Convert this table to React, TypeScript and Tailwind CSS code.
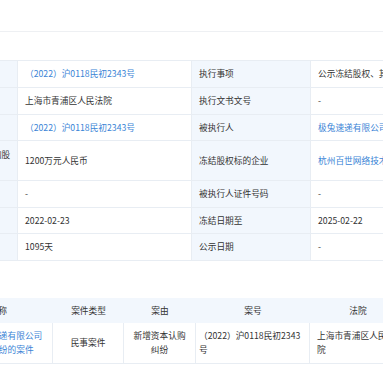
type InfoRow = {
  label1: string[];
  value1: string;
  link1?: boolean;
  label2: string;
  value2: string;
  link2?: boolean;
  height: string;
};

const infoRows: InfoRow[] = [
  {
    label1: ["执行通知书文号"],
    value1: "（2022）沪0118民初2343号",
    link1: true,
    label2: "执行事项",
    value2: "公示冻结股权、其它投资权益",
    height: "h-[27px]"
  },
  {
    label1: ["执行法院"],
    value1: "上海市青浦区人民法院",
    label2: "执行文书文号",
    value2: "-",
    height: "h-[27px]"
  },
  {
    label1: ["执行裁定书文号"],
    value1: "（2022）沪0118民初2343号",
    link1: true,
    label2: "被执行人",
    value2: "极兔速递有限公司",
    link2: true,
    height: "h-[26px]"
  },
  {
    label1: ["被执行人持有的被冻结的股", "权及其他投资权益数额"],
    value1: "1200万元人民币",
    label2: "冻结股权标的企业",
    value2: "杭州百世网络技术有限公司",
    link2: true,
    height: "h-[40px]"
  },
  {
    label1: ["被执行人证件种类"],
    value1: "-",
    label2: "被执行人证件号码",
    value2: "-",
    height: "h-[27px]"
  },
  {
    label1: ["冻结期限自"],
    value1: "2022-02-23",
    label2: "冻结日期至",
    value2: "2025-02-22",
    height: "h-[26px]"
  },
  {
    label1: ["冻结期限"],
    value1: "1095天",
    label2: "公示日期",
    value2: "-",
    height: "h-[27px]"
  }
];

const cell = "flex items-center border-r border-b border-[#e8edf3] px-[7px]";
const labelCell = `${cell} bg-[#f2f7fd] text-[#333]`;

function Value({ text, link }: { text: string; link?: boolean }) {
  return (
    <span className={link ? "whitespace-nowrap text-[#3a84d6]" : "whitespace-nowrap text-[#333]"}>
      {text}
    </span>
  );
}

function DetailTable() {
  return (
    <div className="ml-[-102px] w-[622px] border-t border-l border-[#e8edf3]">
      {infoRows.map((row) => (
        <div key={row.label2} className={`grid grid-cols-[119px_174px_119px_210px] ${row.height}`}>
          <div className={labelCell}>
            <div className="leading-[12px]">
              {row.label1.map((line) => (
                <div key={line} className="whitespace-nowrap">
                  {line}
                </div>
              ))}
            </div>
          </div>
          <div className={cell}>
            <Value text={row.value1} link={row.link1} />
          </div>
          <div className={labelCell}>
            <span className="whitespace-nowrap">{row.label2}</span>
          </div>
          <div className={cell}>
            <Value text={row.value2} link={row.link2} />
          </div>
        </div>
      ))}
    </div>
  );
}

function CaseTable() {
  const head = "flex items-center justify-center";
  const body = "flex items-center border-r border-[#e8edf3] leading-[14px]";
  return (
    <div className="ml-[-74px] w-[480px]">
      <div className="grid h-[25px] grid-cols-[127px_71px_72px_114px_96px] bg-[#f2f7fd] text-[#333]">
        <div className={head}>案件名称</div>
        <div className={head}>案件类型</div>
        <div className={head}>案由</div>
        <div className={head}>案号</div>
        <div className={head}>法院</div>
      </div>
      <div className="grid h-[41px] grid-cols-[127px_71px_72px_114px_96px] border-b border-[#e8edf3] text-[#333]">
        <div className={`${body} pl-[12px] pr-[9px] text-[#3a84d6]`}>
          关于上海极兔速递有限公司新增资本认购纠纷的案件
        </div>
        <div className={`${body} justify-center px-[7px] text-center`}>民事案件</div>
        <div className={`${body} justify-center px-[7px] text-center`}>新增资本认购纠纷</div>
        <div className={`${body} px-[3px]`}>（2022）沪0118民初2343号</div>
        <div className={`${body} px-[7px]`}>上海市青浦区人民法院</div>
      </div>
    </div>
  );
}

export default function App() {
  return (
    <div className="h-[383px] w-[383px] overflow-hidden bg-white text-[8.7px] font-['Noto_Sans_CJK_SC',sans-serif]">
      <div className="h-[31px]" />
      <div className="border-t border-[#eef0f3] pt-[28px]">
        <DetailTable />
      </div>
      <div className="pt-[37px]">
        <CaseTable />
      </div>
    </div>
  );
}
